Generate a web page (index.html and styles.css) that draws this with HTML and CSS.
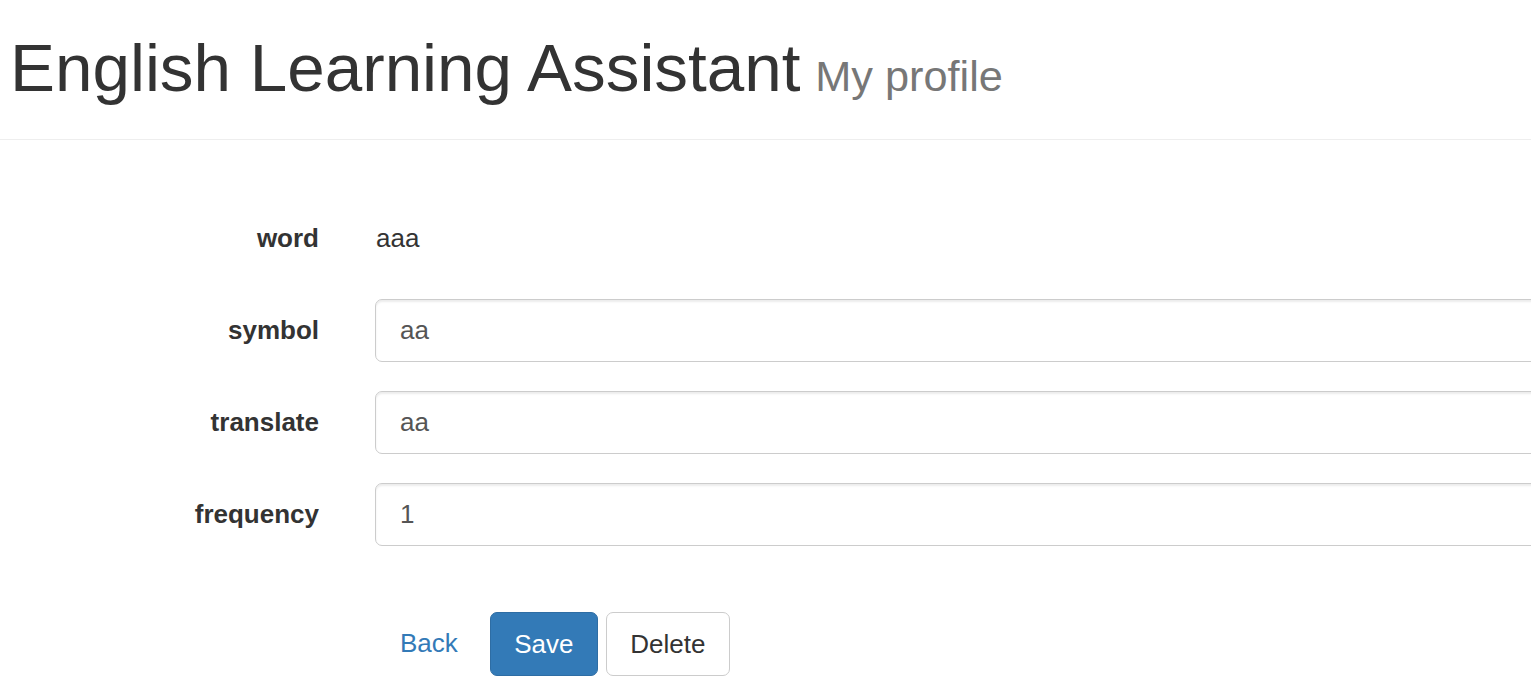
FILE: index.html
```html
<!DOCTYPE html>
<html lang="en">
<head>
<meta charset="utf-8">
<title>English Learning Assistant</title>
<link rel="stylesheet" href="styles.css">
</head>
<body>
<header class="page-header">
  <h1 class="title">English Learning Assistant <small class="subtitle">My profile</small></h1>
</header>
<form class="form">
  <div class="row">
    <label class="label">word</label>
    <div class="static">aaa</div>
  </div>
  <div class="row">
    <label class="label" for="symbol">symbol</label>
    <input class="input" id="symbol" type="text" value="aa">
  </div>
  <div class="row">
    <label class="label" for="translate">translate</label>
    <input class="input" id="translate" type="text" value="aa">
  </div>
  <div class="row">
    <label class="label" for="frequency">frequency</label>
    <input class="input" id="frequency" type="text" value="1">
  </div>
  <div class="actions">
    <a class="btn btn-link" href="#">Back</a>
    <button class="btn btn-primary" type="button">Save</button>
    <button class="btn btn-default" type="button">Delete</button>
  </div>
</form>
</body>
</html>
```
FILE: styles.css
```css
html, body {
  margin: 0;
  padding: 0;
  background: #fff;
  overflow: hidden;
}
body {
  font-family: "Liberation Sans", Arial, Helvetica, sans-serif;
  font-size: 26px;
  line-height: 1.428;
  color: #333;
  width: 1531px;
  height: 692px;
}
.page-header {
  padding: 31px 8px 35px 10px;
  border-bottom: 1px solid #eee;
}
.title {
  margin: 0;
  font-size: 67.4px;
  font-weight: 500;
  line-height: 73px;
  color: #333;
  white-space: nowrap;
}
.subtitle {
  margin-left: -4px;
  font-size: 43.3px;
  font-weight: 400;
  color: #777;
  line-height: 1;
}
.form {
  margin-top: 67px;
  width: 1640px;
}
.row {
  display: grid;
  grid-template-columns: 319px 1fr;
  column-gap: 56px;
  align-items: center;
  min-height: 63px;
  margin-bottom: 29px;
}
.label {
  text-align: right;
  font-weight: 700;
  color: #333;
}
.static {
  padding-left: 1px;
  color: #333;
}
.input {
  box-sizing: border-box;
  height: 63px;
  width: 100%;
  padding: 11px 22px 11px 24px;
  font-family: inherit;
  font-size: 26px;
  color: #555;
  background: #fff;
  border: 1.8px solid #ccc;
  border-radius: 7px;
  box-shadow: inset 0 2px 2px rgba(0, 0, 0, 0.075);
  outline: none;
}
.actions {
  display: flex;
  gap: 8px;
  margin-top: 66px;
  padding-left: 375px;
}
.btn {
  box-sizing: border-box;
  display: inline-flex;
  align-items: center;
  justify-content: center;
  height: 64px;
  padding: 0 22px;
  font-family: inherit;
  font-size: 26px;
  border: 1.8px solid transparent;
  border-radius: 7px;
  text-decoration: none;
  cursor: pointer;
}
.btn-link {
  color: #337ab7;
  background: transparent;
  padding: 0 22px 0 24px;
}
.btn-primary {
  color: #fff;
  background: #337ab7;
  border-color: #2e6da4;
  width: 108px;
  margin-left: 1px;
}
.btn-default {
  color: #333;
  background: #fff;
  border-color: #ccc;
  width: 124px;
}
```
